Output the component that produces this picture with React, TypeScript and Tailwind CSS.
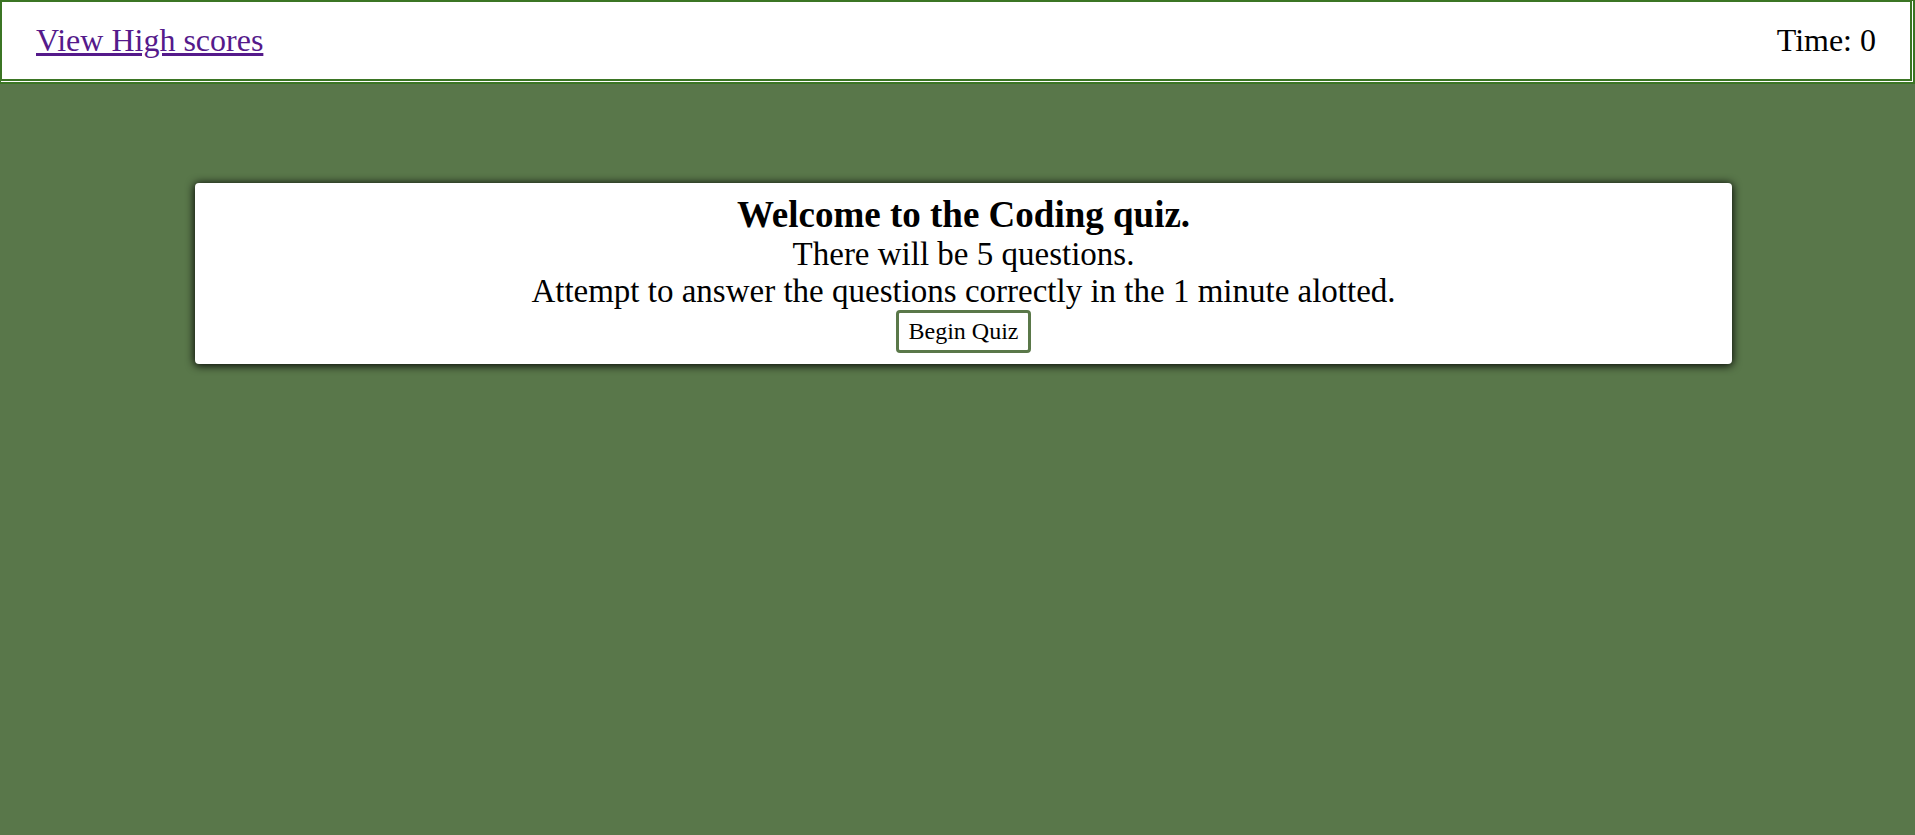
import React from "react";

export default function App() {
  return (
    <div className="min-h-screen bg-[#59774a] font-['Liberation_Serif','Times_New_Roman',serif] text-black">
      <header className="flex items-center justify-between border-double border-[#3b7524] border-t-2 border-l-2 border-r-[5px] border-b-[5px] bg-white pl-[34px] pr-[34px] pt-[20px] pb-[20px] text-[32px] leading-[normal]">
        <a href="#" className="text-[#551a8b] underline">
          View High scores
        </a>
        <span>Time: 0</span>
      </header>

      <main className="pt-[99px]">
        <section className="ml-[195px] flex w-[1537px] flex-col items-center rounded-[4px] bg-white px-[11px] pt-[10px] pb-[11px] text-center shadow-[0_1px_9px_1px_rgba(0,0,0,0.9)]">
          <h1 className="text-[37px] font-bold leading-[normal]">Welcome to the Coding quiz.</h1>
          <p className="text-[33px] leading-[normal]">There will be 5 questions.</p>
          <p className="text-[33px] leading-[normal]">
            Attempt to answer the questions correctly in the 1 minute alotted.
          </p>
          <button className="rounded-[4px] border-[3px] border-[#5a7849] bg-white px-[10px] py-[5px] text-[24px] leading-[normal]">
            Begin Quiz
          </button>
        </section>
      </main>
    </div>
  );
}
